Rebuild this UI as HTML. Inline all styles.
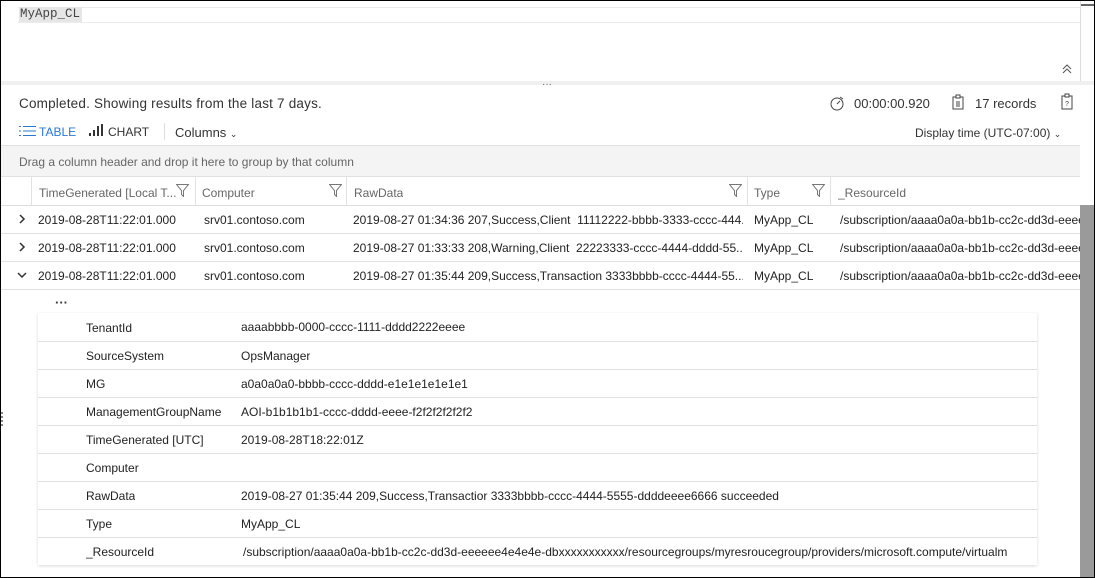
<!DOCTYPE html>
<html><head><style>
*{box-sizing:border-box;margin:0;padding:0}
body{width:1095px;height:578px;overflow:hidden;background:#fff;font-family:"Liberation Sans",sans-serif;color:#333;position:relative}
.frame{position:absolute;inset:0;border:1px solid #000;pointer-events:none;z-index:10}
.abs{position:absolute;white-space:nowrap}
.t12{font-size:12px}
.t13{font-size:13px}
.cell{position:absolute;font-size:12px;color:#222;white-space:nowrap;overflow:hidden}
.hline{position:absolute;height:1px;background:#e1e1e1}
.vline{position:absolute;width:1px;background:#e1e1e1}
</style></head><body>
<div class="frame"></div>
<div class="hline" style="left:18px;top:7px;width:1062px;background:#ececec"></div>
<div class="hline" style="left:18px;top:22px;width:1062px;background:#ececec"></div>
<div class="abs" style="left:19px;top:7px;height:15px;width:63px;background:#e6e6e6"></div>
<div class="abs" style="left:20px;top:7px;font-family:'Liberation Mono',monospace;font-size:12.5px;color:#444">MyApp_CL</div>
<div class="vline" style="left:1080px;top:0;height:81px;background:#ddd"></div>
<div class="abs" style="left:1081px;top:4px;width:13px;height:2px;background:#666"></div>
<svg class="abs" style="left:1061px;top:63px" width="12" height="12" viewBox="0 0 12 12"><path d="M2 6l4-4 4 4M2 10l4-4 4 4" fill="none" stroke="#555" stroke-width="1"/></svg>
<div class="abs" style="left:1px;top:81px;width:1093px;height:4px;background:#f0f0f0"></div>
<div class="abs" style="left:542px;top:79px;font-size:10px;color:#666">···</div>
<div class="abs" style="left:19px;top:96px;font-size:13.5px;letter-spacing:0.2px;color:#333">Completed. Showing results from the last 7 days.</div>
<svg class="abs" style="left:829px;top:95px" width="16" height="16" viewBox="0 0 16 16"><circle cx="8" cy="9" r="6" fill="none" stroke="#444"/><path d="M8 9l3-3M11 2l3 2" stroke="#444" fill="none"/></svg>
<div class="abs t13" style="left:854px;top:96px">00:00:00.920</div>
<svg class="abs" style="left:951px;top:94px" width="14" height="16" viewBox="0 0 14 16"><rect x="2" y="3" width="10" height="12" fill="none" stroke="#444"/><rect x="5" y="1" width="4" height="3" fill="#fff" stroke="#444"/><path d="M5 8h4M5 10h4M5 12h4" stroke="#444"/></svg>
<div class="abs t13" style="left:975px;top:96px">17 records</div>
<svg class="abs" style="left:1060px;top:93px" width="14" height="17" viewBox="0 0 14 17"><rect x="2" y="3" width="10" height="13" fill="none" stroke="#444"/><rect x="5" y="1" width="4" height="3" fill="#fff" stroke="#444"/><text x="7" y="13" font-size="7" text-anchor="middle" fill="#444" font-family="Liberation Sans">?</text></svg>
<svg class="abs" style="left:19px;top:125px" width="17" height="12" viewBox="0 0 17 12"><g stroke="#2b78d0"><path d="M0 1.5h2M4 1.5h13M0 6h2M4 6h13M0 10.5h2M4 10.5h13"/></g></svg>
<div class="abs t12" style="left:39px;top:125px;color:#2b78d0">TABLE</div>
<svg class="abs" style="left:89px;top:124px" width="15" height="13" viewBox="0 0 15 13"><g fill="#333"><rect x="0" y="9" width="2" height="3"/><rect x="4" y="6" width="2" height="6"/><rect x="8" y="2" width="2" height="10"/><rect x="12" y="0" width="2" height="12"/></g></svg>
<div class="abs t12" style="left:108px;top:125px;color:#333">CHART</div>
<div class="vline" style="left:164px;top:123px;height:17px;background:#ddd"></div>
<div class="abs t13" style="left:175px;top:125px">Columns <span style="font-size:9px">&#8964;</span></div>
<div class="abs t12" style="left:915px;top:126px;color:#333">Display time (UTC-07:00) <span style="font-size:9px">&#8964;</span></div>
<div class="abs" style="left:1px;top:145px;width:1079px;height:32px;background:#f4f4f4;border-top:1px solid #e1e1e1;border-bottom:1px solid #e1e1e1"></div>
<div class="abs" style="left:19px;top:155px;font-size:12px;color:#666">Drag a column header and drop it here to group by that column</div>
<div class="hline" style="left:1px;top:205px;width:1079px;background:#ddd"></div>
<div class="vline" style="left:31px;top:177px;height:28px"></div>
<div class="vline" style="left:195px;top:177px;height:28px"></div>
<div class="vline" style="left:346px;top:177px;height:28px"></div>
<div class="vline" style="left:747px;top:177px;height:28px"></div>
<div class="vline" style="left:830px;top:177px;height:28px"></div>
<div class="cell" style="left:39px;top:186px;color:#666">TimeGenerated [Local T...</div>
<div class="cell" style="left:202px;top:186px;color:#666">Computer</div>
<div class="cell" style="left:354px;top:186px;color:#666">RawData</div>
<div class="cell" style="left:754px;top:186px;color:#666">Type</div>
<div class="cell" style="left:838px;top:186px;color:#666">_ResourceId</div>
<svg class="abs" style="left:176px;top:184px" width="13" height="13"><path d="M0.5 0.5h12l-5 6v6l-2-2v-4z" fill="none" stroke="#777"/></svg>
<svg class="abs" style="left:329px;top:184px" width="13" height="13"><path d="M0.5 0.5h12l-5 6v6l-2-2v-4z" fill="none" stroke="#777"/></svg>
<svg class="abs" style="left:729px;top:184px" width="13" height="13"><path d="M0.5 0.5h12l-5 6v6l-2-2v-4z" fill="none" stroke="#777"/></svg>
<svg class="abs" style="left:812px;top:184px" width="13" height="13"><path d="M0.5 0.5h12l-5 6v6l-2-2v-4z" fill="none" stroke="#777"/></svg>
<div class="hline" style="left:1px;top:233px;width:1079px"></div>
<div class="hline" style="left:1px;top:261px;width:1079px"></div>
<div class="hline" style="left:1px;top:289px;width:1079px"></div>
<svg class="abs" style="left:18px;top:214px" width="8" height="10"><path d="M2 1l4 4-4 4" fill="none" stroke="#333" stroke-width="1.5"/></svg>
<svg class="abs" style="left:18px;top:242px" width="8" height="10"><path d="M2 1l4 4-4 4" fill="none" stroke="#333" stroke-width="1.5"/></svg>
<svg class="abs" style="left:17px;top:271px" width="10" height="8"><path d="M1 2l4 4 4-4" fill="none" stroke="#333" stroke-width="1.5"/></svg>
<div class="cell" style="left:38px;top:213px">2019-08-28T11:22:01.000</div>
<div class="cell" style="left:204px;top:213px">srv01.contoso.com</div>
<div class="cell" style="left:353px;top:213px;width:390px">2019-08-27 01:34:36 207,Success,Client&nbsp; 11112222-bbbb-3333-cccc-444...</div>
<div class="cell" style="left:754px;top:213px">MyApp_CL</div>
<div class="cell" style="left:840px;top:213px;width:240px">/subscription/aaaa0a0a-bb1b-cc2c-dd3d-eeee</div>
<div class="cell" style="left:38px;top:241px">2019-08-28T11:22:01.000</div>
<div class="cell" style="left:204px;top:241px">srv01.contoso.com</div>
<div class="cell" style="left:353px;top:241px;width:390px">2019-08-27 01:33:33 208,Warning,Client&nbsp; 22223333-cccc-4444-dddd-55...</div>
<div class="cell" style="left:754px;top:241px">MyApp_CL</div>
<div class="cell" style="left:840px;top:241px;width:240px">/subscription/aaaa0a0a-bb1b-cc2c-dd3d-eeee</div>
<div class="cell" style="left:38px;top:269px">2019-08-28T11:22:01.000</div>
<div class="cell" style="left:204px;top:269px">srv01.contoso.com</div>
<div class="cell" style="left:353px;top:269px;width:390px">2019-08-27 01:35:44 209,Success,Transaction 3333bbbb-cccc-4444-55...</div>
<div class="cell" style="left:754px;top:269px">MyApp_CL</div>
<div class="cell" style="left:840px;top:269px;width:240px">/subscription/aaaa0a0a-bb1b-cc2c-dd3d-eeee</div>
<div class="abs" style="left:1080px;top:177px;width:14px;height:28px;background:#fff"></div>
<div class="abs" style="left:1080px;top:205px;width:14px;height:373px;background:#9a9a9a"></div>
<div class="abs" style="left:55px;top:295px;font-size:13px;color:#333;font-weight:bold">···</div>
<div class="abs" style="left:38px;top:313px;width:999px;height:252px;box-shadow:0 1px 3px rgba(0,0,0,.15)"></div>
<div class="hline" style="left:38px;top:341px;width:999px"></div>
<div class="hline" style="left:38px;top:369px;width:999px"></div>
<div class="hline" style="left:38px;top:397px;width:999px"></div>
<div class="hline" style="left:38px;top:425px;width:999px"></div>
<div class="hline" style="left:38px;top:453px;width:999px"></div>
<div class="hline" style="left:38px;top:481px;width:999px"></div>
<div class="hline" style="left:38px;top:509px;width:999px"></div>
<div class="hline" style="left:38px;top:537px;width:999px"></div>
<div class="cell" style="left:86px;top:321px">TenantId</div><div class="cell" style="left:241px;top:320px">aaaabbbb-0000-cccc-1111-dddd2222eeee</div>
<div class="cell" style="left:86px;top:349px">SourceSystem</div><div class="cell" style="left:241px;top:349px">OpsManager</div>
<div class="cell" style="left:86px;top:377px">MG</div><div class="cell" style="left:241px;top:377px">a0a0a0a0-bbbb-cccc-dddd-e1e1e1e1e1e1</div>
<div class="cell" style="left:86px;top:405px">ManagementGroupName</div><div class="cell" style="left:241px;top:405px">AOI-b1b1b1b1-cccc-dddd-eeee-f2f2f2f2f2f2</div>
<div class="cell" style="left:86px;top:433px">TimeGenerated [UTC]</div><div class="cell" style="left:241px;top:433px">2019-08-28T18:22:01Z</div>
<div class="cell" style="left:86px;top:461px">Computer</div>
<div class="cell" style="left:86px;top:489px">RawData</div><div class="cell" style="left:241px;top:489px">2019-08-27 01:35:44 209,Success,Transactior 3333bbbb-cccc-4444-5555-ddddeeee6666 succeeded</div>
<div class="cell" style="left:86px;top:517px">Type</div><div class="cell" style="left:241px;top:517px">MyApp_CL</div>
<div class="cell" style="left:86px;top:545px">_ResourceId</div><div class="cell" style="left:243px;top:545px">/subscription/aaaa0a0a-bb1b-cc2c-dd3d-eeeeee4e4e4e-dbxxxxxxxxxxx/resourcegroups/myresroucegroup/providers/microsoft.compute/virtualm</div>
<div class="abs" style="left:1px;top:412px;width:2px;height:14px;border-left:2px dotted #888"></div>
</body></html>
